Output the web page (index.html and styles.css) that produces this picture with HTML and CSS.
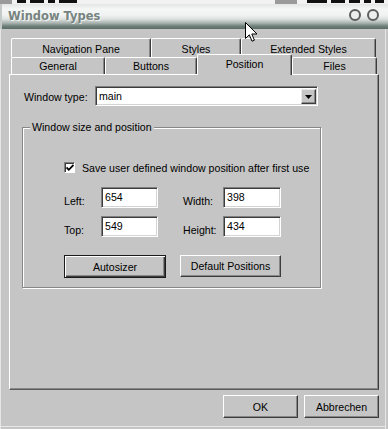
FILE: index.html
```html
<!DOCTYPE html>
<html>
<head>
<meta charset="utf-8">
<link rel="stylesheet" href="styles.css">
</head>
<body>
<div class="screen">
  <div class="behind">
    <span class="bg-gray w12"></span>
    <span class="blk b1"></span><span class="blk b2"></span><span class="blk b3"></span><span class="blk b4"></span>
    <span class="spacer"></span>
    <span class="bg-gray w22"></span>
    <span class="blk b5"></span><span class="blk b2"></span><span class="blk b6"></span><span class="blk b3"></span><span class="blk b1"></span>
  </div>
  <div class="window">
    <div class="titlebar">
      <span class="title">Window Types</span>
      <span class="rings"><i class="ring"></i><i class="ring"></i></span>
    </div>
    <div class="client">
      <div class="tabrow row1">
        <div class="tab w140">Navigation Pane</div>
        <div class="tab w90">Styles</div>
        <div class="tab w135">Extended Styles</div>
      </div>
      <div class="tabrow row2">
        <div class="tab w94">General</div>
        <div class="tab w92">Buttons</div>
        <div class="tab sel w95">Position</div>
        <div class="tab w85">Files</div>
      </div>
      <div class="panel">
        <div class="typerow">
          <span class="typelabel">Window type:</span>
          <div class="combo">
            <span class="comboval">main</span>
            <span class="dropbtn"><svg width="7" height="4" viewBox="0 0 7 4"><path d="M0 0H7L3.5 4Z" fill="#000"/></svg></span>
          </div>
        </div>
        <div class="group">
          <span class="legend">Window size and position</span>
          <div class="checkrow">
            <span class="checkbox"><svg width="8" height="8" viewBox="0 0 8 8"><path d="M0.5 3.5L2.8 5.8L7.5 1" fill="none" stroke="#000" stroke-width="1.8"/></svg></span>
            <span>Save user defined window position after first use</span>
          </div>
          <div class="fields">
            <span class="flabel">Left:</span>
            <div class="input">654</div>
            <span class="flabel">Width:</span>
            <div class="input wide">398</div>
            <span class="flabel">Top:</span>
            <div class="input">549</div>
            <span class="flabel">Height:</span>
            <div class="input wide">434</div>
          </div>
          <div class="grpbtns">
            <div class="btn def autos">Autosizer</div>
            <div class="btn defpos">Default Positions</div>
          </div>
        </div>
      </div>
      <div class="footer">
        <div class="btn dlg">OK</div>
        <div class="btn dlg">Abbrechen</div>
      </div>
    </div>
  </div>
  <svg class="cursor" width="14" height="21" viewBox="0 0 14 21"><path d="M0.5 0.5V16.5L4.3 12.8L7 19.2L9.4 18.2L6.8 12H12Z" fill="#fff" stroke="#000" stroke-width="1" stroke-linejoin="miter"/></svg>
</div>
</body>
</html>
```
FILE: styles.css
```css
* { box-sizing: border-box; }
html, body { margin: 0; padding: 0; }
body {
  width: 388px;
  height: 429px;
  overflow: hidden;
  background: #c5c5c5;
  font-family: "Liberation Sans", Arial, sans-serif;
  font-size: 10.6px;
  color: #000;
}
.screen {
  position: relative;
  width: 388px;
  height: 429px;
  display: flex;
  flex-direction: column;
}
.behind {
  height: 4px;
  overflow: hidden;
  background: #f2f2f2;
  display: flex;
  align-items: flex-start;
}
.bg-gray { height: 4px; background: #9a9a9a; flex: none; }
.w12 { width: 12px; margin-right: 5px; }
.w22 { width: 22px; margin-right: 10px; }
.blk { height: 3px; background: #111; flex: none; margin-right: 4px; }
.b1 { width: 9px; }
.b2 { width: 14px; }
.b3 { width: 7px; }
.b4 { width: 18px; }
.b5 { width: 20px; }
.b6 { width: 11px; }
.spacer { flex: 1; }
.window {
  flex: 1;
  display: flex;
  flex-direction: column;
  background: #c5c5c5;
}
.titlebar {
  height: 25px;
  flex: none;
  display: flex;
  align-items: center;
  justify-content: space-between;
  padding: 0 9px 0 8px;
  background: linear-gradient(to bottom, #e2e6e4 0px, #f5f6f6 5px, #f1f3f2 11px, #dde2e0 15px, #aab4b1 19px, #6f807a 22px, #5b6d67 25px);
  box-shadow: inset 2px 0 #c4cac8;
}
.title {
  font-family: "DejaVu Sans", Verdana, sans-serif;
  font-weight: bold;
  font-size: 11.5px;
  color: #76837f;
  text-shadow: 1px 1px 0 rgba(255,255,255,0.7);
  margin-top: -2px;
}
.rings { display: flex; gap: 6px; margin-top: -3px; }
.ring {
  display: block;
  width: 12px;
  height: 12px;
  border-radius: 50%;
  border: 2.5px solid #5c5e5d;
  background: #eceeed;
}
.client {
  flex: 1;
  padding: 9px 0 0 9px;
  box-shadow: inset 1px 0 #e6e6e6, inset -2px 0 #c5c5c5, inset -3px 0 #e6e6e6, inset 0 -2px #c5c5c5, inset 0 -3px #e6e6e6;
}
.tabrow { display: flex; margin-left: 2px; }
.row1 { height: 19px; }
.row2 { height: 17px; }
.tab {
  display: flex;
  align-items: center;
  justify-content: center;
  flex: none;
  background: #c5c5c5;
  border-top: 1px solid #fff;
  border-left: 1px solid #fff;
  border-right: 1px solid #3c3c3c;
  box-shadow: inset -1px 0 #878787;
  border-radius: 2px 2px 0 0;
  padding-top: 1px;
  white-space: nowrap;
}
.row2 .tab { padding-top: 0; }
.tab.sel {
  height: 21px;
  margin-top: -3px;
  margin-bottom: -1px;
  position: relative;
  z-index: 1;
  padding-bottom: 3px;
}
.w140 { width: 140px; }
.w90 { width: 90px; }
.w135 { width: 135px; }
.w94 { width: 94px; }
.w92 { width: 92px; }
.w95 { width: 95px; }
.w85 { width: 85px; }
.panel {
  width: 370px;
  height: 316px;
  border-top: 1px solid #fff;
  border-left: 1px solid #fff;
  border-right: 1px solid #3c3c3c;
  border-bottom: 1px solid #5a5a5a;
  box-shadow: inset -1px -1px #878787;
  padding: 11px 0 0 14px;
}
.typerow { display: flex; align-items: center; height: 20px; }
.typelabel { width: 71px; flex: none; padding-top: 1px; }
.combo {
  width: 223px;
  height: 20px;
  display: flex;
  align-items: stretch;
  background: #fff;
  border: 1px solid;
  border-color: #808080 #fff #fff #808080;
  box-shadow: inset 1px 1px #3c3c3c, inset -1px -1px #d4d4d4;
  padding: 2px 1px 1px 2px;
}
.comboval { flex: 1; padding: 1px 0 0 1px; }
.dropbtn {
  width: 15px;
  flex: none;
  display: flex;
  align-items: center;
  justify-content: center;
  background: #c5c5c5;
  border: 1px solid;
  border-color: #e8e8e8 #3c3c3c #3c3c3c #e8e8e8;
  box-shadow: inset -1px -1px #878787;
}
.group {
  position: relative;
  width: 299px;
  height: 161px;
  margin: 21px 0 0 -2px;
  border: 1px solid #878787;
  box-shadow: inset 1px 1px #fff, 1px 1px #fff;
  padding: 33px 0 0 41px;
}
.legend {
  position: absolute;
  left: 7px;
  top: -7px;
  background: #c5c5c5;
  padding: 0 2px;
  line-height: 13px;
}
.checkrow { display: flex; align-items: center; height: 13px; gap: 7px; }
.checkbox {
  width: 11px;
  height: 11px;
  flex: none;
  background: #fff;
  border: 1px solid;
  border-color: #808080 #fff #fff #808080;
  box-shadow: inset 1px 1px #3c3c3c;
  display: flex;
  align-items: center;
  justify-content: center;
  padding: 1px 0 0 1px;
}
.fields {
  display: grid;
  grid-template-columns: 37px 82px 40px 58px;
  grid-auto-rows: 21px;
  row-gap: 8px;
  margin-top: 13px;
}
.flabel { align-self: end; padding-bottom: 1px; }
.input {
  width: 57px;
  height: 21px;
  background: #fff;
  border: 1px solid;
  border-color: #808080 #fff #fff #808080;
  box-shadow: inset 1px 1px #3c3c3c, inset -1px -1px #d4d4d4;
  padding: 3px 0 0 3px;
}
.input.wide { width: 58px; }
.grpbtns { display: flex; gap: 14px; margin-top: 18px; }
.btn {
  display: flex;
  align-items: center;
  justify-content: center;
  background: #c5c5c5;
  border: 1px solid;
  border-color: #fff #3c3c3c #3c3c3c #fff;
  box-shadow: inset -1px -1px #878787;
  white-space: nowrap;
}
.btn.def {
  border-color: #1a1a1a;
  box-shadow: inset 1px 1px #fff, inset -1px -1px #3c3c3c, inset -2px -2px #878787;
}
.autos { width: 102px; height: 23px; }
.defpos { width: 101px; height: 22px; }
.footer {
  width: 370px;
  display: flex;
  justify-content: flex-end;
  gap: 6px;
  margin-top: 5px;
}
.dlg { width: 75px; height: 23px; }
.cursor {
  position: absolute;
  left: 245px;
  top: 22px;
}
```
